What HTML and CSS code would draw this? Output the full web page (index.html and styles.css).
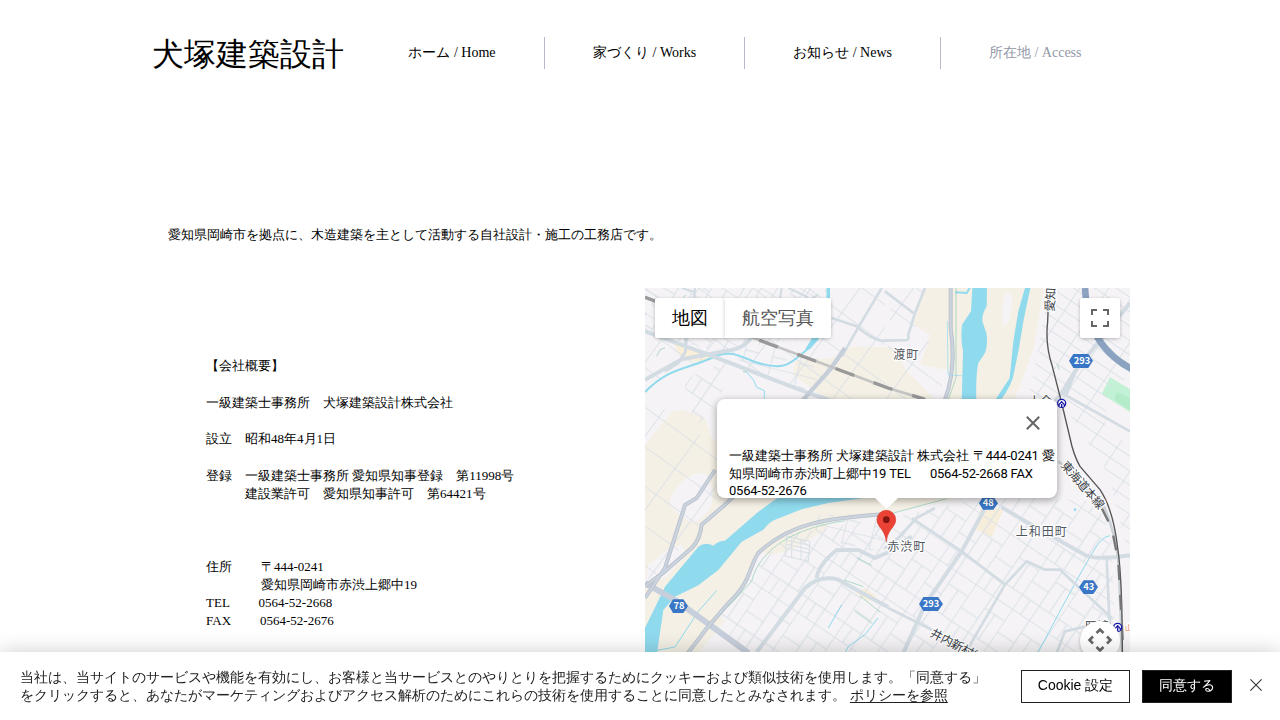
FILE: index.html
```html
<!DOCTYPE html>
<html lang="ja">
<head>
<meta charset="utf-8">
<title>犬塚建築設計 | 所在地</title>
<link rel="stylesheet" href="styles.css">
</head>
<body>
<header class="header">
  <h1 class="brand">犬塚建築設計</h1>
  <nav class="nav">
    <a class="nav-item">ホーム / Home</a>
    <a class="nav-item">家づくり / Works</a>
    <a class="nav-item">お知らせ / News</a>
    <a class="nav-item current">所在地 / Access</a>
  </nav>
</header>
<main class="main">
  <p class="lead">愛知県岡崎市を拠点に、木造建築を主として活動する自社設計・施工の工務店です。</p>
  <div class="columns">
    <section class="company">
      <p>【会社概要】</p>
      <p>一級建築士事務所　犬塚建築設計株式会社</p>
      <p>設立　昭和48年4月1日</p>
      <p>登録　一級建築士事務所 愛知県知事登録　第11998号<br>　　　建設業許可　愛知県知事許可　第64421号</p>
      <dl class="contact">
        <dt>住所</dt><dd class="addr">〒444-0241<br>愛知県岡崎市赤渋上郷中19</dd>
        <dt>TEL</dt><dd class="tel">0564-52-2668</dd>
        <dt>FAX</dt><dd class="fax">0564-52-2676</dd>
      </dl>
    </section>
    <section class="map">
      <svg class="map-canvas" viewBox="0 0 1455 1293">
        <defs>
          <pattern id="gridA" width="84" height="62" patternUnits="userSpaceOnUse" patternTransform="rotate(32)"><path d="M0 1H84M1 0V62M44 0V32M44 32H84" class="minor"/></pattern>
          <pattern id="gridB" width="184" height="132" patternUnits="userSpaceOnUse" patternTransform="rotate(-56)"><path d="M0 1H184M1 0V132M54 0V132M0 62H184M104 0V62M142 62V132M54 98H142M0 30H54" class="minor"/></pattern>
          <pattern id="gridC" width="84" height="70" patternUnits="userSpaceOnUse" patternTransform="rotate(14)"><path d="M0 1H84M1 0V70M1 37H44" class="minor"/></pattern>
          <pattern id="gridD" width="72" height="36" patternUnits="userSpaceOnUse" patternTransform="rotate(34)"><path d="M0 1H72M1 0V36" class="minor"/></pattern>
          <pattern id="gridF" width="130" height="96" patternUnits="userSpaceOnUse" patternTransform="rotate(36)"><path d="M0 1H130M1 0V96" class="minor"/></pattern>
        </defs>
        <rect width="1455" height="1293" fill="#f5f3f5"/>
        <g fill="#f5f0e5">
          <path d="M836 0H1196L1166 180 1126 290 1106 340H906L926 250 826 230 856 140 806 110 820 60Z"/>
          <path d="M620 176 740 178 786 250 880 345H560L445 262 450 220 560 210Z"/>
          <path d="M0 470 80 372 110 365 180 390 200 450 330 546 980 546 960 625 740 673 560 691 440 721 340 796 300 876 250 946 180 1016 120 1110 0 1110Z"/>
          <path d="M160 1095 240 1000 215 975 110 1095Z"/>
          <path d="M350 790 380 740 440 715 550 695 545 725 430 790 370 800Z"/>
        </g>
        <g fill="#f5f3f5"><path d="M110 580Q160 540 190 565Q215 630 190 670Q150 720 120 690Q60 660 80 620ZM10 830 60 790 110 770 125 800 60 870 0 880Z"/><path d="M1078 20Q1105 0 1100 60Q1090 120 1075 115Q1065 90 1078 20Z"/></g>
        <path d="M80 150 150 190 205 200 180 222 110 215Z" fill="#f9efd8"/>
        <path d="M1010 650 1075 667 1040 748 990 722Z" fill="#f7eddb"/>
        <path d="M630 915 660 900 695 925 670 940Z" fill="#f7eddb"/>
        <path d="M1395 268 1455 304V372L1370 318Z" fill="#c3f1d5"/><path d="M1415 312 1455 330V368L1408 335Z" fill="#b4ecc9"/>
        <path d="M0 300 210 205 480 320 720 410 720 0 0 0Z" fill="url(#gridF)"/>
        <path d="M0 0H560L530 140 210 190 0 130Z" fill="url(#gridA)"/>
        <path d="M115 275 250 215 225 335 150 420Z" fill="url(#gridB)"/>
        <path d="M250 200 340 160 560 240 470 310Z" fill="url(#gridC)"/>
        <path d="M0 320 215 480V640L60 840 0 880Z" fill="url(#gridF)"/>
        <path d="M740 0 836 0 810 120 910 220 880 333H720Z" fill="url(#gridF)"/>
        <path d="M1210 0H1455V268L1390 300 1380 420 1455 470V820L1390 560 1250 340 1150 333 1180 180Z" fill="url(#gridD)"/>
        <path d="M740 690 960 640 1190 628 1350 640 1400 740 1410 1095H330L190 1010 330 840 440 735Z" fill="url(#gridB)"/>
        <path d="M500 680 700 680 720 790 610 780 500 720Z" fill="url(#gridC)"/>
        <path d="M425 745 495 760 490 820 420 804ZM425 757 495 772M425 769 495 784M425 781 495 796M440 748V808M468 754V815" class="minor"/>

        <g class="water">
          <path d="M982 0H1026L1025 55Q1010 80 1012 100L1024 135Q1030 165 1020 195L1000 225Q992 260 994 345H950L954 190Q946 150 951 110L978 70Z"/>
          <path d="M1140 0H1156L1136 95 1122 180 1108 250Q1103 290 1065 340H1048L1094 270 1105 160 1120 70Z"/>
          <path d="M0 1020 60 896 110 836 160 776Q180 760 205 773Q220 758 240 758L340 671 405 625 690 625 550 645 470 664 390 695Q375 700 355 725L290 761 220 846 160 892 90 926 55 966 36 1095H0Z"/>
          <path d="M545 0H555V70L520 155 495 183 480 185 510 135 543 80Z"/>
          <path d="M930 13 965 15 974 0" class="stream wide"/>
          <path d="M0 312C70 240 120 245 200 210C250 185 275 200 330 222C410 247 430 230 455 210L495 178" class="stream wide"/>
          <path d="M300 248 325 275 335 298 358 308V331M215 908 160 970 90 1077 30 1088" class="stream"/>
          <path d="M1395 743Q1370 745 1345 790L1310 850 1250 960 1180 1092M699 990 660 1040 610 1075 600 1095M550 1020 590 950" class="stream"/>
          <circle cx="1290" cy="665" r="4"/>
        </g>

        <g class="road">
          <path d="M150 0 148 40 118 200M110 0 150 12M410 0 405 30 450 60 520 20M430 0 490 28"/>
          <path d="M0 130 190 200 490 315 640 365" class="major"/>
          <path d="M0 275 110 214 260 186Q290 180 310 160L350 110" class="major"/>
          <path d="M120 120 122 190 100 225 60 250M560 90 635 115Q680 155 710 158H729M710 0 640 118 590 205" class="medium"/>
          <path d="M840 0 810 75 790 140 790 155M720 10 805 75M720 158 790 156" class="medium"/>
          <path d="M600 180 555 245 470 340" class="steel"/>
          <path d="M1290 250 1250 315 1230 340M1455 45 1370 150 1290 250 1260 325" class="major"/>
          <path d="M1250 315 1455 430" class="medium"/>
          <path d="M1070 658 1150 705 1310 795Q1340 820 1455 802" class="major"/>
          <path d="M1020 660 950 790 840 950 775 1095" class="major"/>
          <path d="M765 745 720 780 750 760 815 690 870 660" class="medium"/>
          <path d="M800 690 950 790 1080 890M730 960 850 1020 980 1095M1080 890 1145 820 1200 845H1245L1400 990M1080 890 970 1080M1385 810 1395 1040M1235 1095 1260 1030 1385 1000" class="medium"/>
          <path d="M335 1092 390 1020 480 900Q525 860 580 875L730 958M515 870Q520 830 575 786H640L690 810 725 795 800 745" class="major"/>
          <path d="M0 885 90 936 180 1000 310 1095" class="highway"/>
        </g>
        <g class="embankment-base"><path d="M210 546 155 630 120 651 60 840 0 930M350 546 240 650 170 710Q165 755 140 780L60 850 0 895M720 678C560 690 440 700 340 795C310 840 320 880 250 946L190 1015 125 1100M917 0 917 120Q935 240 900 335"/></g>
        <g class="embankment"><path d="M210 546 155 630 120 651 60 840 0 930M350 546 240 650 170 710Q165 755 140 780L60 850 0 895M720 678C560 690 440 700 340 795C310 840 320 880 250 946L190 1015 125 1100M917 0 917 120Q935 240 900 335"/></g>
        <path d="M1320 0 1325 60Q1350 190 1470 248" class="bypass"/>
        <path d="M907 100 909 260 955 264" class="stream thin"/>
        <path d="M933 0V270L910 335M600 698C450 720 345 780 320 880L250 955M745 675 905 632M35 205 45 185 60 180M115 30 122 20M294 250 302 253M636 810 680 832M598 876 655 896M645 924 705 972M630 970 682 1006M1238 230 1242 245" class="green"/>

        <path d="M0 28 320 148 729 300 840 334" class="rail-base"/><path d="M0 28 320 148 729 300 840 334" class="rail-dash"/>
        <path d="M1240 520 1370 640Q1415 740 1420 820T1438 1293" class="rail-base side"/>
        <path d="M1212 0 1208 100Q1200 170 1222 235L1250 345 1275 450Q1285 500 1305 535L1365 605Q1405 665 1418 780Q1432 870 1432 1100" class="rail-line"/>
        <path d="M1370 660 1400 720 1420 820 1434 1070" class="rail-dash side-dash"/>

        <g class="shield">
          <path d="M1272 218 1285 198H1330L1344 218 1330 240H1285Z"/><text x="1311" y="229">293</text>
          <path d="M1002 646 1014 626H1045L1059 646 1045 665H1014Z"/><text x="1030" y="655">48</text>
          <path d="M1302 897 1316 877H1345L1359 897 1345 918H1316Z"/><text x="1331" y="907">43</text>
          <path d="M822 948 835 927H879L894 948 879 969H835Z"/><text x="858" y="958">293</text>
          <path d="M72 954 84 934H115L129 954 115 975H84Z"/><text x="102" y="964">78</text>
        </g>
        <g class="place">
          <text x="745" y="214">渡町</text>
          <text x="1112" y="744">上和田町</text>
          <text x="727" y="788">赤渋町</text>
          <text class="street" x="1151" y="355">上合</text>
          <text class="street" x="1320" y="1028">岡崎</text>
          <text class="street" transform="translate(1226 71) rotate(-86)">愛知環</text>
          <text class="street" transform="translate(1246 533) rotate(49)">東海道本線</text>
          <text class="street" transform="translate(853 1043) rotate(28)">井内新村線</text>
          <text x="1440" y="1027" class="orange">山</text>
        </g>
        <g fill="#fff" stroke="#1717a8" stroke-width="4"><circle cx="1250" cy="346" r="12"/><path d="M1242 356V350L1250 341 1258 350V356M1250 348V360"/><circle cx="1418" cy="1018" r="12"/><path d="M1410 1028V1022L1418 1013 1426 1022V1028M1418 1018V1030"/></g>
        <path d="M724 761C720 722 696 718 696 695A28 28 0 0 1 752 695C752 718 728 722 724 761Z" fill="#ea4335" stroke="#d93a2d" stroke-width="2"/><circle cx="724" cy="695" r="10" fill="#811411"/>
      </svg>
      <div class="map-types"><button class="type active">地図</button><button class="type">航空写真</button></div>
      <button class="fullscreen"><svg width="18" height="18" viewBox="0 0 18 18"><path d="M1 6V1H6M12 1H17V6M17 12V17H12M6 17H1V12" fill="none" stroke="#666" stroke-width="2"/></svg></button>
      <div class="bubble">
        <svg class="bubble-close" width="14" height="14" viewBox="0 0 14 14"><path d="M.8.8 13.2 13.2M13.2.8.8 13.2" stroke="#666" stroke-width="2"/></svg>
        <p>一級建築士事務所 犬塚建築設計 株式会社 〒<span class="num">444-0241</span> 愛<br>知県岡崎市赤渋町上郷中<span class="num">19 TEL</span> <span class="gap"></span><span class="num">0564-52-2668 FAX</span><br><span class="num">0564-52-2676</span></p>
      </div>
      <button class="pan"><svg width="40" height="40" viewBox="0 0 40 40"><path d="M16.5 12 20 8.5 23.5 12M27 15.5 30.5 19 27 22.5M23.5 26 20 29.5 16.5 26M13 22.5 9.5 19 13 15.5" fill="none" stroke="#666" stroke-width="2.6"/></svg></button>
    </section>
  </div>
</main>
<aside class="cookie">
  <p class="cookie-text">当社は、当サイトのサービスや機能を有効にし、お客様と当サービスとのやりとりを把握するためにクッキーおよび類似技術を使用します。「同意する」<br>をクリックすると、あなたがマーケティングおよびアクセス解析のためにこれらの技術を使用することに同意したとみなされます。 <a class="policy">ポリシーを参照</a></p>
  <button class="cookie-button settings">Cookie 設定</button>
  <button class="cookie-button accept">同意する</button>
  <svg class="cookie-close" width="12" height="12" viewBox="0 0 12 12"><path d="M.4.4 11.6 11.6M11.6.4.4 11.6" stroke="#333" stroke-width="1.1"/></svg>
</aside>
</body>
</html>
```
FILE: styles.css
```css
* { box-sizing: border-box; }
html, body { margin: 0; height: 720px; overflow: hidden; background: #fff; }
body { font-family: "Liberation Serif", serif; color: #000; text-spacing-trim: space-all; }
p, h1, dl, dd { margin: 0; }
button { font: inherit; border: 0; padding: 0; background: #fff; }
.header { display: flex; align-items: center; padding: 33px 0 0 152px; height: 73px; }
.brand { width: 208px; font-size: 32px; font-weight: 400; line-height: 38px; padding-top: 2px; white-space: nowrap; }
.nav { display: flex; height: 32px; }
.nav-item { padding: 0 48px; border-right: 1px solid #b8b9cc; font-size: 14px; line-height: 31px; white-space: nowrap; }
.nav-item:first-child { padding: 0 48.6px 0 48.4px; }
.nav-item:last-child { border: 0; }
.current { color: #9297a7; }
.main { padding: 153px 150px 0; }
.lead { padding-left: 18px; font-size: 13px; line-height: 18px; }
.columns { display: grid; grid-template-columns: 495px 485px; margin-top: 44px; }
.company { padding: 69px 0 0 56px; font-size: 13px; line-height: 18px; white-space: nowrap; }
.company p { margin-bottom: 18.6px; }
.contact { display: grid; grid-template-columns: 52px 1fr; margin-top: 55px; }
.contact .addr { padding-left: 3px; }
.contact .tel { padding-left: 0.5px; }
.contact .fax { padding-left: 2px; }
.map { position: relative; height: 431px; overflow: hidden; font-family: Roboto, sans-serif; }
.map-canvas { display: block; width: 485px; height: 431px; }
.minor { fill: none; stroke: #d8e0e6; stroke-width: 3; }
.water { fill: #90daee; }
.stream { fill: none; stroke: #90daee; stroke-width: 3; }
.wide { stroke-width: 6; }
.thin { stroke-width: 2; }
.road { fill: none; stroke: #d3dce3; stroke-width: 6; stroke-linejoin: round; }
.medium { stroke-width: 8; }
.major { stroke-width: 12; }
.steel { stroke: #c5ced9; stroke-width: 13; }
.highway { stroke: #c6cfdb; stroke-width: 18; }
.embankment-base { fill: none; stroke: #b8c0ca; stroke-width: 12; stroke-linejoin: round; }
.embankment { fill: none; stroke: #cbd3de; stroke-width: 7; stroke-linejoin: round; }
.bypass { fill: none; stroke: #8ba3c1; stroke-width: 20; }
.green { fill: none; stroke: #8dccb3; stroke-width: 2; }
.rail-base { fill: none; stroke: #c4c4c4; stroke-width: 8; }
.rail-dash { fill: none; stroke: #999; stroke-width: 10; stroke-dasharray: 60 62; }
.rail-line { fill: none; stroke: #555; stroke-width: 4; }
.side { stroke: #ccd2d7; stroke-width: 8; }
.side-dash { stroke: #777; stroke-width: 7; stroke-dasharray: 45 45; }
.shield { fill: #3976c5; }
.shield text { fill: #fff; font: 700 28px "Noto Sans CJK JP", sans-serif; text-anchor: middle; }
.place { fill: #50565e; stroke: #fff; stroke-width: 7; paint-order: stroke; font-family: "Noto Sans CJK JP", sans-serif; font-size: 36px; letter-spacing: 3px; }
.street { fill: #3c4249; letter-spacing: -1px; }
.orange { fill: #ed7534; font-size: 22px; }
.map-types { position: absolute; left: 10px; top: 10px; display: flex; height: 40px; box-shadow: 0 1px 4px -1px #0006; border-radius: 2px; overflow: hidden; }
.type { padding: 0 17px; font-size: 18px; color: #565656; box-shadow: -1px 0 3px #0002; }
.active { width: 70px; color: #000; font-weight: 500; }
.fullscreen { position: absolute; right: 10px; top: 10px; width: 40px; height: 40px; display: grid; place-items: center; border-radius: 2px; box-shadow: 0 1px 4px -1px #0006; }
.bubble { position: absolute; left: 72px; top: 111px; width: 340px; height: 99px; background: #fff; border-radius: 8px; padding: 48px 0 0 12px; box-shadow: 0 2px 7px 1px #0000004d; font-size: 13px; line-height: 17.6px; white-space: nowrap; }
.bubble::after { content: ""; position: absolute; left: 157px; top: 98px; width: 25px; height: 12px; background: #fff; clip-path: polygon(0 0, 100% 0, 50% 100%); }
.bubble-close { position: absolute; right: 17px; top: 17px; }
.num { letter-spacing: -0.22px; }
.gap { display: inline-block; width: 16px; }
.pan { position: absolute; left: 435px; top: 333px; width: 40px; height: 40px; border-radius: 50%; box-shadow: 0 1px 4px -1px #0006; }
.cookie { position: fixed; inset: 652px 0 0; display: flex; align-items: center; padding: 0 18px 0 20px; background: #fff; box-shadow: 0 0 20px #0003; font-family: "Liberation Sans", sans-serif; font-size: 14px; color: #222; }
.cookie-text { width: 1001px; line-height: 18px; white-space: nowrap; }
.policy { text-decoration: underline; text-underline-offset: 2px; }
.cookie-button { height: 33px; border: 1px solid #222; font-size: 14px; }
.settings { width: 109px; color: #000; }
.accept { width: 90px; margin-left: 12px; background: #000; color: #fff; }
.cookie-close { margin: -3px 0 0 18px; }
```
